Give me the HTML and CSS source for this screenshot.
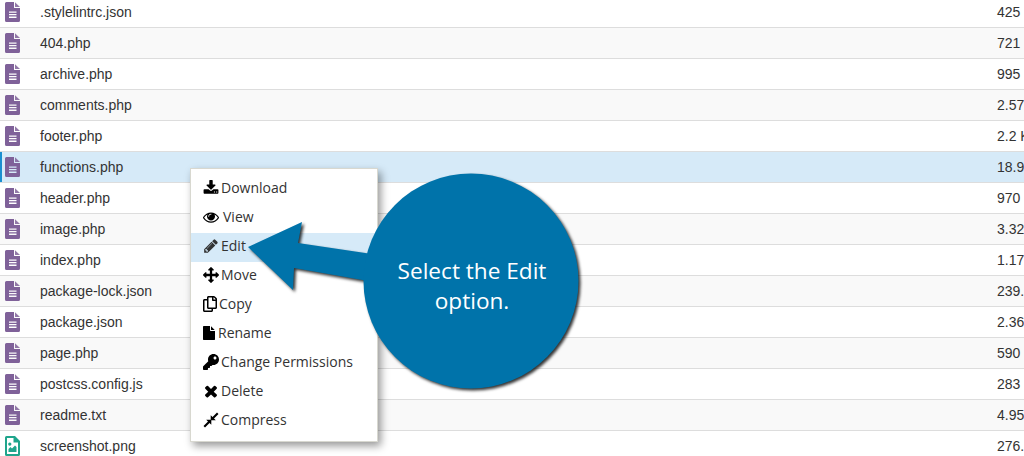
FILE: index.html
```html
<!DOCTYPE html>
<html lang="en">
<head>
    <meta charset="UTF-8">
    <title>File Manager</title>
    <link rel="stylesheet" href="styles.css">
</head>
<body>
    <svg class="defs" width="0" height="0">
        <symbol id="doc" viewBox="0 0 15 20">
            <path d="M1.500 0H9V5.500Q9 6 9.500 6H15V18.500Q15 20 13.500 20H1.500Q0 20 0 18.500V1.500Q0 0 1.500 0ZM4 9.400V10.700H11.500V9.400ZM4 12V13.300H11.500V12ZM4 14.600V15.900H11.500V14.600Z" fill-rule="evenodd"/>
            <path d="M10 0.300L15 5H10Z" opacity="0.85"/>
        </symbol>
        <symbol id="pic" viewBox="0 0 15 20">
            <path d="M1.500 0H10L15 5V18.500Q15 20 13.500 20H1.500Q0 20 0 18.500V1.500Q0 0 1.500 0ZM2 2V18H13V6.500H8.500V2ZM4.800 6.500A1.600 1.600 0 1 1 4.790 6.500ZM3.500 16V13L5.500 11L7 12.500L10 9.500L11.500 11V16Z" fill-rule="evenodd"/>
        </symbol>
    </svg>

    <div class="file-list">
        <div class="file-row"><svg class="file-icon"><use href="#doc"/></svg><span class="file-name">.stylelintrc.json</span><span class="file-size">425 bytes</span></div>
        <div class="file-row"><svg class="file-icon"><use href="#doc"/></svg><span class="file-name">404.php</span><span class="file-size">721 bytes</span></div>
        <div class="file-row"><svg class="file-icon"><use href="#doc"/></svg><span class="file-name">archive.php</span><span class="file-size">995 bytes</span></div>
        <div class="file-row"><svg class="file-icon"><use href="#doc"/></svg><span class="file-name">comments.php</span><span class="file-size">2.57 KB</span></div>
        <div class="file-row"><svg class="file-icon"><use href="#doc"/></svg><span class="file-name">footer.php</span><span class="file-size">2.2 KB</span></div>
        <div class="file-row selected"><svg class="file-icon"><use href="#doc"/></svg><span class="file-name">functions.php</span><span class="file-size">18.9 KB</span></div>
        <div class="file-row"><svg class="file-icon"><use href="#doc"/></svg><span class="file-name">header.php</span><span class="file-size">970 bytes</span></div>
        <div class="file-row"><svg class="file-icon"><use href="#doc"/></svg><span class="file-name">image.php</span><span class="file-size">3.32 KB</span></div>
        <div class="file-row"><svg class="file-icon"><use href="#doc"/></svg><span class="file-name">index.php</span><span class="file-size">1.17 KB</span></div>
        <div class="file-row"><svg class="file-icon"><use href="#doc"/></svg><span class="file-name">package-lock.json</span><span class="file-size">239.5 KB</span></div>
        <div class="file-row"><svg class="file-icon"><use href="#doc"/></svg><span class="file-name">package.json</span><span class="file-size">2.36 KB</span></div>
        <div class="file-row"><svg class="file-icon"><use href="#doc"/></svg><span class="file-name">page.php</span><span class="file-size">590 bytes</span></div>
        <div class="file-row"><svg class="file-icon"><use href="#doc"/></svg><span class="file-name">postcss.config.js</span><span class="file-size">283 bytes</span></div>
        <div class="file-row"><svg class="file-icon"><use href="#doc"/></svg><span class="file-name">readme.txt</span><span class="file-size">4.95 KB</span></div>
        <div class="file-row"><svg class="file-icon image"><use href="#pic"/></svg><span class="file-name">screenshot.png</span><span class="file-size">276.5 KB</span></div>
    </div>

    <ul class="context-menu">
        <li class="menu-item">
            <svg class="menu-icon" viewBox="0 0 1792 1792"><path d="M1344 1344q0-26-19-45t-45-19-45 19-19 45 19 45 45 19 45-19 19-45zm256 0q0-26-19-45t-45-19-45 19-19 45 19 45 45 19 45-19 19-45zm128-224v320q0 40-28 68t-68 28h-1472q-40 0-68-28t-28-68v-320q0-40 28-68t68-28h465l135 136q58 56 136 56t136-56l136-136h464q40 0 68 28t28 68zm-325-569q17 41-14 70l-448 448q-18 19-45 19t-45-19l-448-448q-31-29-14-70 17-39 59-39h256v-448q0-26 19-45t45-19h256q26 0 45 19t19 45v448h256q42 0 59 39z"/></svg>
            Download
        </li>
        <li class="menu-item">
            <svg class="menu-icon wide" viewBox="0 0 1792 1792"><path d="M1664 960q-152-236-381-353 61 104 61 225 0 185-131.500 316.500t-316.500 131.500-316.500-131.500-131.500-316.500q0-121 61-225-229 117-381 353 133 205 333.500 326.500t434.500 121.500 434.500-121.500 333.500-326.500zm-720-384q0-20-14-34t-34-14q-125 0-214.500 89.500t-89.500 214.500q0 20 14 34t34 14 34-14 14-34q0-86 61-147t147-61q20 0 34-14t14-34zm848 384q0 34-20 69-140 230-376.500 368.500t-499.500 138.500-499.500-139-376.500-368q-20-35-20-69t20-69q140-229 376.500-368t499.500-139 499.500 139 376.500 368q20 35 20 69z"/></svg>
            View
        </li>
        <li class="menu-item active">
            <svg class="menu-icon" viewBox="0 0 1792 1792"><path d="M491 1536l91-91-235-235-91 91v107h128v128h107zm523-928q0-22-22-22-10 0-17 7l-542 542q-7 7-7 17 0 22 22 22 10 0 17-7l542-542q7-7 7-17zm-54-192l416 416-832 832h-416v-416zm683 96q0 53-37 90l-166 166-416-416 166-165q36-38 90-38 53 0 91 38l235 234q37 39 37 91z"/></svg>
            Edit
        </li>
        <li class="menu-item">
            <svg class="menu-icon" viewBox="0 0 1792 1792"><path d="M1792 896q0 26-19 45l-256 256q-19 19-45 19t-45-19-19-45v-128h-384v384h128q26 0 45 19t19 45-19 45l-256 256q-19 19-45 19t-45-19l-256-256q-19-19-19-45t19-45 45-19h128v-384h-384v128q0 26-19 45t-45 19-45-19l-256-256q-19-19-19-45t19-45l256-256q19-19 45-19t45 19 19 45v128h384v-384h-128q-26 0-45-19t-19-45 19-45l256-256q19-19 45-19t45 19l256 256q19 19 19 45t-19 45-45 19h-128v384h384v-128q0-26 19-45t45-19 45 19l256 256q19 19 19 45z"/></svg>
            Move
        </li>
        <li class="menu-item">
            <svg class="menu-icon copy" viewBox="0 0 448 512"><path d="M433.941 65.941l-51.882-51.882A48 48 0 0 0 348.118 0H176c-26.510 0-48 21.490-48 48v48H48c-26.510 0-48 21.490-48 48v320c0 26.510 21.490 48 48 48h224c26.510 0 48-21.490 48-48v-48h80c26.510 0 48-21.490 48-48V99.882a48 48 0 0 0-14.059-33.941zM266 464H54a6 6 0 0 1-6-6V150a6 6 0 0 1 6-6h74v224c0 26.510 21.490 48 48 48h96v42a6 6 0 0 1-6 6zm128-96H182a6 6 0 0 1-6-6V54a6 6 0 0 1 6-6h106v88c0 13.255 10.745 24 24 24h88v202a6 6 0 0 1-6 6zm6-256h-64V48h9.632c1.591 0 3.117.632 4.243 1.757l48.368 48.368a6 6 0 0 1 1.757 4.243V112z"/></svg>
            Copy
        </li>
        <li class="menu-item">
            <svg class="menu-icon rename" viewBox="128 0 1536 1792"><path d="M1152 512v-472q22 14 36 28l408 408q14 14 28 36h-472zm-128 32q0 40 28 68t68 28h544v1056q0 40-28 68t-68 28h-1344q-40 0-68-28t-28-68v-1600q0-40 28-68t68-28h800v544z"/></svg>
            Rename
        </li>
        <li class="menu-item">
            <svg class="menu-icon" viewBox="0 0 512 512"><path d="M512 176.001C512 273.203 433.202 352 336 352c-11.220 0-22.190-1.062-32.827-3.069l-24.012 27.014A23.999 23.999 0 0 1 261.223 384H224v40c0 13.255-10.745 24-24 24h-40v40c0 13.255-10.745 24-24 24H24c-13.255 0-24-10.745-24-24v-78.059c0-6.365 2.529-12.470 7.029-16.971l161.802-161.802C163.108 213.814 160 195.271 160 176 160 78.798 238.797.001 335.999 0 433.488-.001 512 78.511 512 176.001zM336 128c0 26.510 21.490 48 48 48s48-21.490 48-48-21.490-48-48-48-48 21.490-48 48z"/></svg>
            Change Permissions
        </li>
        <li class="menu-item">
            <svg class="menu-icon" viewBox="100 100 1592 1592"><path d="M1490 1322q0 40-28 68l-136 136q-28 28-68 28t-68-28l-294-294-294 294q-28 28-68 28t-68-28l-136-136q-28-28-28-68t28-68l294-294-294-294q-28-28-28-68t28-68l136-136q28-28 68-28t68 28l294 294 294-294q28-28 68-28t68 28l136 136q28 28 28 68t-28 68l-294 294 294 294q28 28 28 68z"/></svg>
            Delete
        </li>
        <li class="menu-item">
            <svg class="menu-icon" viewBox="0 0 16 16"><path d="M0.500 14L2 15.500L6.500 11L8.300 12.800V7.700H3.200L5 9.500ZM15.500 2L14 0.500L9.500 5L7.700 3.200V8.300H12.800L11 6.500Z"/></svg>
            Compress
        </li>
    </ul>

    <div class="callout">
        <svg class="callout-shape" width="350" height="230" viewBox="240 165 350 230">
            <path d="M248 247L302 222L298 243L372 254L368 281L294 268L293 290Z"/>
            <circle cx="471" cy="281" r="107.500"/>
        </svg>
        <p class="callout-text">Select the Edit option.</p>
    </div>
</body>
</html>
```

FILE: styles.css
```css
html, body {
    height: 456px;
    margin: 0;
    overflow: hidden;
}

body {
    font-family: 'Liberation Sans', Arial, sans-serif;
    font-size: 14px;
    color: #333;
    background: #fff;
}

.defs {
    display: block;
}

/* file table, scrolled a little so the first row is cut */
.file-list {
    margin-top: -3px;
}

.file-row {
    display: flex;
    align-items: center;
    height: 30px;
    border-bottom: 1px solid #ddd;
    padding-left: 5px;
    white-space: nowrap;
}

.file-row:nth-child(even) {
    background: #f9f9f9;
}

.file-row.selected {
    background: #d6eaf8;
    box-shadow: inset 2px 0 0 #1a8fd0;
}

.file-icon {
    width: 15px;
    height: 20px;
    flex: none;
    fill: #7f6199;
    margin-right: 20px;
}

.file-icon.image {
    fill: #1fa58c;
}

.file-name {
    flex: none;
    width: 957px;
}

.file-size {
    flex: none;
}

/* right click menu */
.context-menu {
    position: absolute;
    left: 190px;
    top: 168px;
    width: 186px;
    margin: 0;
    padding: 6px 0 5px;
    list-style: none;
    background: #fff;
    border: 1px solid #d8d8d0;
    box-shadow: 3px 4px 8px rgba(0, 0, 0, 0.4);
    font-family: 'Open Sans', sans-serif;
    font-size: 14px;
    color: #333;
}

.menu-item {
    display: flex;
    align-items: center;
    box-sizing: border-box;
    height: 29px;
    padding: 0 0 4px 12px;
    white-space: nowrap;
}

.menu-item.active {
    background: #d6eaf8;
}

.menu-icon {
    width: 16px;
    height: 16px;
    flex: none;
    margin-right: 2px;
    fill: #000;
}

.menu-icon.wide {
    margin-right: 4px;
}

.menu-icon.copy {
    width: 14px;
    margin-right: 2px;
}

.menu-icon.rename {
    width: 12px;
    margin-right: 3px;
}

.menu-item.active .menu-icon {
    fill: #333;
}

/* blue arrow and circle laid over the screenshot */
.callout-shape {
    position: absolute;
    left: 240px;
    top: 165px;
    fill: #0073aa;
    filter: drop-shadow(2px 2px 1.5px rgba(0, 0, 0, 0.8));
}

.callout-text {
    position: absolute;
    left: 392px;
    top: 256px;
    width: 160px;
    margin: 0;
    font-family: 'Open Sans', sans-serif;
    font-size: 22.6px;
    line-height: 30px;
    text-align: center;
    color: #fff;
}
```
